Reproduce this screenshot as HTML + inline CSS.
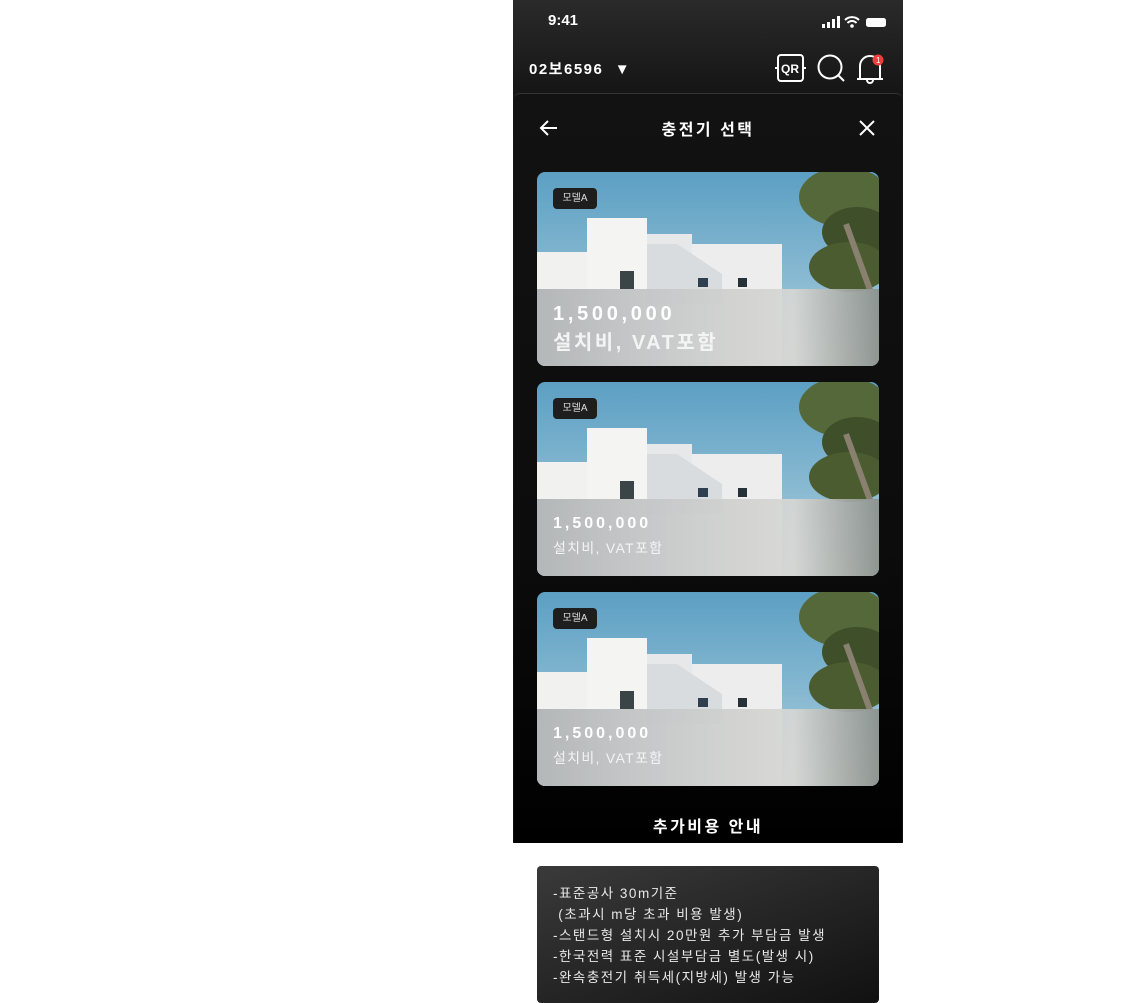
<!DOCTYPE html>
<html><head><meta charset="utf-8"><style>
*{margin:0;padding:0;box-sizing:border-box}
body{width:1139px;height:1003px;background:#fff;position:relative;overflow:hidden;font-family:"Liberation Sans","Noto Sans CJK KR",sans-serif;color:#fff}
.phone{position:absolute;left:513px;top:0;width:390px;height:843px;background:linear-gradient(#2a2a2a,#161616 90px,#111);overflow:hidden}
.sheet{position:absolute;left:1px;top:93px;width:388px;height:750px;background:linear-gradient(#121212,#0c0c0c 60%,#000);border-radius:6px 6px 0 0;border-top:1px solid #333}
.t{position:absolute;white-space:nowrap}
.card{position:absolute;left:24px;width:342px;height:194px;border-radius:8px;overflow:hidden;background:linear-gradient(180deg,#5c9fc3,#8dbcd3 60%,#b5d2de)}
.card div{position:absolute}
.w{background:#f1f1ef}
.ov{left:0;top:117px;width:342px;height:77px;background:linear-gradient(90deg,rgba(175,178,180,.92),rgba(200,202,202,.92) 40%,rgba(215,215,212,.92) 75%,rgba(140,145,140,.92));}
.tag{left:16px;top:16px;width:44px;height:21px;background:#1e1e1e;border-radius:4px;font-size:10px;line-height:21px;text-align:center;color:#ddd}
.tr1{left:262px;top:-5px;width:90px;height:60px;border-radius:50%;background:#55683a}
.tr2{left:285px;top:35px;width:70px;height:50px;border-radius:50%;background:#3f4f2a}
.tr3{left:272px;top:70px;width:80px;height:50px;border-radius:50%;background:#4a5c30}
.trk{left:318px;top:50px;width:6px;height:70px;background:#8a8070;transform:rotate(-20deg)}
.p1{left:16px;top:133px;font-size:16px;font-weight:bold;letter-spacing:3px}
.p2{left:16px;top:156px;font-size:14px;letter-spacing:1.3px;color:#f4f4f4}
.info{position:absolute;left:537px;top:866px;width:342px;height:137px;background:linear-gradient(160deg,#3a3a3a,#111);border-radius:4px;padding:17px 16px;font-size:13.5px;line-height:21px;letter-spacing:1.5px;color:#e8e8e8}
</style></head><body>
<div class="phone">
 <div class="t" style="left:35px;top:12px;font-size:15px;font-weight:bold">9:41</div>
 <svg style="position:absolute;left:308px;top:15px" width="68" height="14"><rect x="1" y="9" width="3" height="4" fill="#fff"/><rect x="6" y="7" width="3" height="6" fill="#fff"/><rect x="11" y="4" width="3" height="9" fill="#fff"/><rect x="16" y="1" width="3" height="12" fill="#fff"/><path d="M24 5a10 10 0 0 1 14 0M26.5 8a6 6 0 0 1 9 0" stroke="#fff" stroke-width="2" fill="none"/><circle cx="31" cy="11" r="1.8" fill="#fff"/><rect x="45" y="3" width="20" height="9" rx="2.5" fill="#fff"/></svg>
 <div class="t" style="left:16px;top:58px;font-size:15px;font-weight:bold;letter-spacing:1.5px">02보6596 &nbsp;▼</div>
 <svg style="position:absolute;left:262px;top:53px" width="112" height="32" fill="none" stroke="#fff" stroke-width="2"><rect x="3" y="2" width="25" height="26" rx="3"/><text x="6" y="20" font-size="12" font-weight="bold" fill="#fff" stroke="none" font-family="Liberation Sans">QR</text><path d="M0 15h3M28 15h3" /><circle cx="55" cy="14" r="11.5"/><path d="M63 22l6 6"/><path d="M85 26V13a10 10 0 0 1 20 0v13h3H82zM92 27a3 3 0 0 0 6 0"/><circle cx="103" cy="7" r="5.5" fill="#f03c3c" stroke="none"/><text x="101" y="10" font-size="8" fill="#fff" stroke="none">1</text></svg>
 <div class="sheet">
  <svg style="position:absolute;left:25px;top:24px" width="20" height="20" fill="none" stroke="#fff" stroke-width="2"><path d="M18 10H2M9 3l-7 7 7 7"/></svg>
  <div class="t" style="left:0;width:388px;text-align:center;top:22px;font-size:16px;font-weight:bold;letter-spacing:2.5px">충전기 선택</div>
  <svg style="position:absolute;left:344px;top:25px" width="18" height="18" stroke="#fff" stroke-width="2"><path d="M2 2l14 14M16 2L2 16"/></svg>
 </div>
 <div class="t" style="left:0;width:390px;text-align:center;top:813px;font-size:16px;font-weight:bold;letter-spacing:2.5px">추가비용 안내</div>
</div>
<div class="card" style="left:537px;top:172px">
 <div class="w" style="left:0;top:80px;width:55px;height:120px"></div>
 <div class="w" style="left:50px;top:46px;width:60px;height:150px;background:#f4f4f2"></div>
 <div class="w" style="left:110px;top:62px;width:45px;height:140px;background:#e6e8ea"></div>
 <div class="w" style="left:155px;top:72px;width:90px;height:130px;background:#ecedec"></div>
 <div style="left:110px;top:72px;width:75px;height:60px;background:#d8dcdf;clip-path:polygon(0 0,40% 0,100% 50%,100% 100%,0 100%)"></div>
 <div style="left:83px;top:99px;width:14px;height:18px;background:#3b4548"></div>
 <div style="left:161px;top:106px;width:10px;height:9px;background:#2e4050"></div>
 <div style="left:201px;top:106px;width:9px;height:9px;background:#263238"></div>
 <div class="tr1"></div><div class="tr2"></div><div class="tr3"></div><div class="trk"></div>
 <div class="ov"></div>
 <div class="tag">모델A</div>
 <div class="t" style="left:16px;top:131px;font-size:20px;font-weight:bold;letter-spacing:3.7px">1,500,000</div>
 <div class="t" style="left:16px;top:154px;font-size:20px;font-weight:bold;letter-spacing:2.5px;color:#f4f4f4">설치비, VAT포함</div>
</div>
<div class="card" style="left:537px;top:382px">
 <div class="w" style="left:0;top:80px;width:55px;height:120px"></div>
 <div class="w" style="left:50px;top:46px;width:60px;height:150px;background:#f4f4f2"></div>
 <div class="w" style="left:110px;top:62px;width:45px;height:140px;background:#e6e8ea"></div>
 <div class="w" style="left:155px;top:72px;width:90px;height:130px;background:#ecedec"></div>
 <div style="left:110px;top:72px;width:75px;height:60px;background:#d8dcdf;clip-path:polygon(0 0,40% 0,100% 50%,100% 100%,0 100%)"></div>
 <div style="left:83px;top:99px;width:14px;height:18px;background:#3b4548"></div>
 <div style="left:161px;top:106px;width:10px;height:9px;background:#2e4050"></div>
 <div style="left:201px;top:106px;width:9px;height:9px;background:#263238"></div>
 <div class="tr1"></div><div class="tr2"></div><div class="tr3"></div><div class="trk"></div>
 <div class="ov"></div>
 <div class="tag">모델A</div>
 <div class="t p1">1,500,000</div>
 <div class="t p2">설치비, VAT포함</div>
</div>
<div class="card" style="left:537px;top:592px">
 <div class="w" style="left:0;top:80px;width:55px;height:120px"></div>
 <div class="w" style="left:50px;top:46px;width:60px;height:150px;background:#f4f4f2"></div>
 <div class="w" style="left:110px;top:62px;width:45px;height:140px;background:#e6e8ea"></div>
 <div class="w" style="left:155px;top:72px;width:90px;height:130px;background:#ecedec"></div>
 <div style="left:110px;top:72px;width:75px;height:60px;background:#d8dcdf;clip-path:polygon(0 0,40% 0,100% 50%,100% 100%,0 100%)"></div>
 <div style="left:83px;top:99px;width:14px;height:18px;background:#3b4548"></div>
 <div style="left:161px;top:106px;width:10px;height:9px;background:#2e4050"></div>
 <div style="left:201px;top:106px;width:9px;height:9px;background:#263238"></div>
 <div class="tr1"></div><div class="tr2"></div><div class="tr3"></div><div class="trk"></div>
 <div class="ov"></div>
 <div class="tag">모델A</div>
 <div class="t p1">1,500,000</div>
 <div class="t p2">설치비, VAT포함</div>
</div>
<div class="info">-표준공사 30m기준<br>&nbsp;(초과시 m당 초과 비용 발생)<br>-스탠드형 설치시 20만원 추가 부담금 발생<br>-한국전력 표준 시설부담금 별도(발생 시)<br>-완속충전기 취득세(지방세) 발생 가능</div>
</body></html>
